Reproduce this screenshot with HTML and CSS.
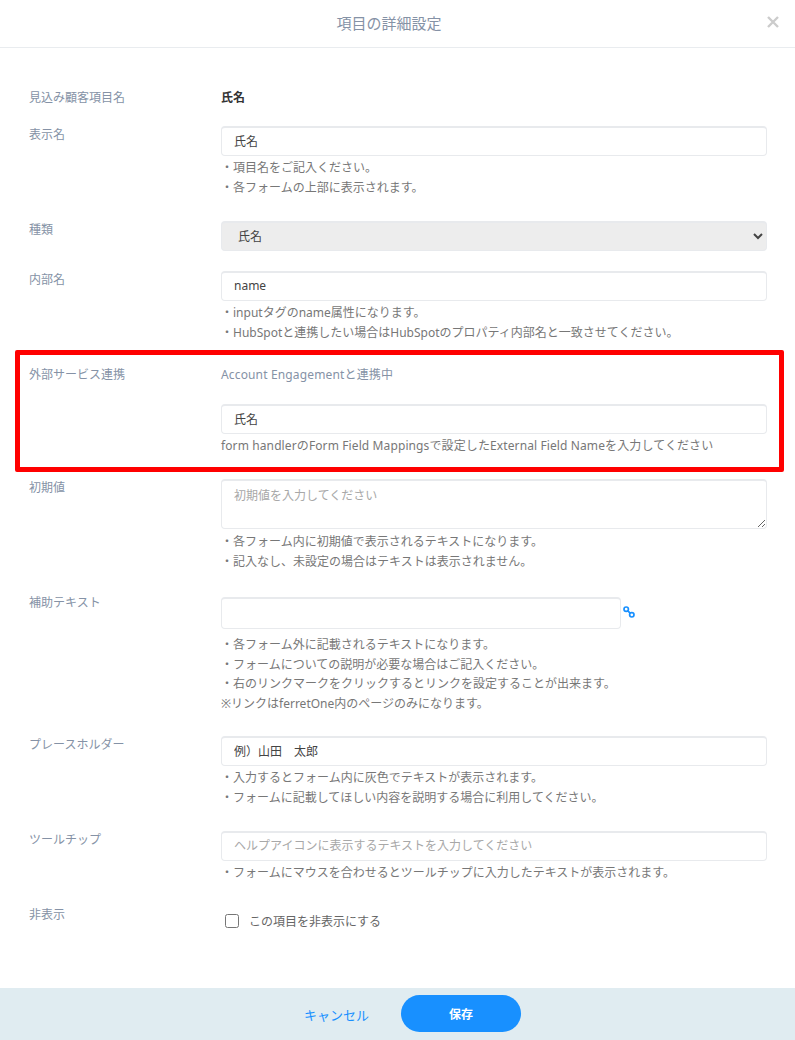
FILE: index.html
```html
<!DOCTYPE html>
<html lang="ja">
<head>
    <meta charset="UTF-8">
    <meta name="viewport" content="width=device-width, initial-scale=1.0">
    <title>項目の詳細設定</title>
    <link rel="stylesheet" href="styles.css">
</head>
<body>
    <div class="modal">
        <header class="modal-header">
            <h1 class="modal-title">項目の詳細設定</h1>
            <button class="modal-close" type="button" aria-label="閉じる">
                <svg width="12" height="12" viewBox="0 0 12 12"><path d="M1 1l10 10M11 1L1 11"/></svg>
            </button>
        </header>

        <form class="modal-body">
            <div class="row row-name">
                <div class="label">見込み顧客項目名</div>
                <div class="field"><strong class="static">氏名</strong></div>
            </div>

            <div class="row">
                <div class="label">表示名</div>
                <div class="field">
                    <input class="input" type="text" value="氏名">
                    <ul class="hints">
                        <li>・項目名をご記入ください。</li>
                        <li>・各フォームの上部に表示されます。</li>
                    </ul>
                </div>
            </div>

            <div class="row row-type">
                <div class="label">種類</div>
                <div class="field">
                    <select class="input select" disabled>
                        <option>氏名</option>
                    </select>
                </div>
            </div>

            <div class="row">
                <div class="label">内部名</div>
                <div class="field">
                    <input class="input" type="text" value="name">
                    <ul class="hints">
                        <li>・inputタグのname属性になります。</li>
                        <li>・HubSpotと連携したい場合はHubSpotのプロパティ内部名と一致させてください。</li>
                    </ul>
                </div>
            </div>

            <div class="row">
                <div class="label">外部サービス連携</div>
                <div class="field">
                    <div class="linked">Account Engagementと連携中</div>
                    <input class="input" type="text" value="氏名">
                    <ul class="hints hints-wide">
                        <li>form handlerのForm Field Mappingsで設定したExternal Field Nameを入力してください</li>
                    </ul>
                </div>
            </div>

            <div class="row row-default">
                <div class="label">初期値</div>
                <div class="field">
                    <textarea class="input textarea" placeholder="初期値を入力してください"></textarea>
                    <ul class="hints">
                        <li>・各フォーム内に初期値で表示されるテキストになります。</li>
                        <li>・記入なし、未設定の場合はテキストは表示されません。</li>
                    </ul>
                </div>
            </div>

            <div class="row">
                <div class="label">補助テキスト</div>
                <div class="field">
                    <div class="input-link">
                        <input class="input" type="text">
                        <svg class="link-icon" width="12" height="12" viewBox="0 0 12 12">
                            <circle cx="3.2" cy="3.2" r="2.2"/>
                            <circle cx="8.8" cy="8.8" r="2.2"/>
                            <path d="M4.6 4.6l2.8 2.8"/>
                        </svg>
                    </div>
                    <ul class="hints hints-tight">
                        <li>・各フォーム外に記載されるテキストになります。</li>
                        <li>・フォームについての説明が必要な場合はご記入ください。</li>
                        <li>・右のリンクマークをクリックするとリンクを設定することが出来ます。</li>
                        <li>※リンクはferretOne内のページのみになります。</li>
                    </ul>
                </div>
            </div>

            <div class="row">
                <div class="label">プレースホルダー</div>
                <div class="field">
                    <input class="input" type="text" value="例）山田　太郎">
                    <ul class="hints">
                        <li>・入力するとフォーム内に灰色でテキストが表示されます。</li>
                        <li>・フォームに記載してほしい内容を説明する場合に利用してください。</li>
                    </ul>
                </div>
            </div>

            <div class="row">
                <div class="label">ツールチップ</div>
                <div class="field">
                    <input class="input" type="text" placeholder="ヘルプアイコンに表示するテキストを入力してください">
                    <ul class="hints">
                        <li>・フォームにマウスを合わせるとツールチップに入力したテキストが表示されます。</li>
                    </ul>
                </div>
            </div>

            <div class="row">
                <div class="label">非表示</div>
                <div class="field">
                    <label class="check">
                        <input type="checkbox">
                        <span>この項目を非表示にする</span>
                    </label>
                </div>
            </div>
        </form>

        <footer class="modal-footer">
            <a class="cancel" href="#">キャンセル</a>
            <button class="save" type="button">保存</button>
        </footer>

        <div class="highlight"></div>
    </div>
</body>
</html>
```

FILE: styles.css
```css
* {
    box-sizing: border-box;
}

body {
    margin: 0;
    background-color: #fff;
    font-family: "Noto Sans", "Noto Sans CJK JP", sans-serif;
    font-size: 12px;
    color: #8592a6;
}

.modal {
    position: relative;
    display: flex;
    flex-direction: column;
    width: 795px;
    height: 1040px;
}

.modal-header {
    display: flex;
    align-items: center;
    justify-content: center;
    position: relative;
    flex: none;
    height: 48px;
    padding-right: 17px;
    border-bottom: 1px solid #e9ecef;
}

.modal-title {
    margin: 0 0 2px;
    font-size: 15px;
    font-weight: 400;
    color: #8592a6;
}

.modal-close {
    position: absolute;
    top: 15px;
    right: 15px;
    width: 14px;
    height: 14px;
    padding: 1px;
    border: 0;
    background: none;
}

.modal-close svg {
    display: block;
    fill: none;
    stroke: #ccc;
    stroke-width: 2.4;
}

.modal-body {
    flex: 1;
    padding: 41px 28px 0 29px;
}

.row {
    display: grid;
    grid-template-columns: 192px 1fr;
    padding-bottom: 23px;
}

.row-name { padding-bottom: 20px; }
.row-type { padding-bottom: 20px; }
.row-default { padding-bottom: 22px; }

.label {
    padding-top: 1px;
    line-height: 16px;
    color: #8592a6;
}

.static {
    display: block;
    padding-top: 1px;
    font-weight: 700;
    line-height: 16px;
    color: #333;
}

.input {
    display: block;
    width: 100%;
    height: 30px;
    padding: 0 12px 2px;
    border: 1px solid #e8eaed;
    border-top-width: 2px;
    border-radius: 4px;
    outline: 0;
    background-color: #fff;
    font: inherit;
    color: #444;
}

.input::placeholder {
    color: #a8a8a8;
    opacity: 1;
}

.select {
    padding-bottom: 0;
    background-color: #ededed;
    opacity: 1;
    color: #444;
}

.textarea {
    height: 50px;
    padding-top: 5px;
    resize: vertical;
}

.hints {
    margin: 2px 0 0;
    padding: 0;
    list-style: none;
    line-height: 20px;
    color: #777;
}

.row-default .hints {
    margin-top: 3px;
}

.hints-tight {
    margin-top: 6px;
    line-height: 19.5px;
}

.hints-wide {
    letter-spacing: 0.11px;
}

.linked {
    margin-bottom: 21px;
    padding-top: 1px;
    line-height: 16px;
    letter-spacing: 0.15px;
}

.input-link {
    display: flex;
    align-items: center;
    gap: 2px;
    margin-top: 3px;
}

.input-link .input {
    width: 400px;
    height: 32px;
}

.link-icon {
    flex: none;
    margin-bottom: 2px;
    fill: none;
    stroke: #1890ff;
    stroke-width: 1.7;
}

.check {
    display: flex;
    align-items: center;
    gap: 10px;
    height: 20px;
    margin-top: 5px;
    padding-left: 4px;
    color: #666;
}

.check input {
    width: 14px;
    height: 14px;
    margin: 0;
}

.modal-footer {
    display: flex;
    align-items: center;
    justify-content: center;
    gap: 32px;
    flex: none;
    height: 52px;
    padding-left: 30px;
    background-color: #e0ecf1;
}

.cancel {
    font-size: 13px;
    color: #1890ff;
    text-decoration: none;
}

.save {
    width: 120px;
    height: 37px;
    margin-bottom: 1px;
    border: 0;
    border-radius: 19px;
    background-color: #1890ff;
    font: inherit;
    font-weight: 700;
    color: #fff;
}

/* annotation drawn over the external service row */
.highlight {
    position: absolute;
    top: 350px;
    left: 15px;
    width: 769px;
    height: 122px;
    border: 5px solid #f00;
    border-radius: 2px;
    pointer-events: none;
}
```
